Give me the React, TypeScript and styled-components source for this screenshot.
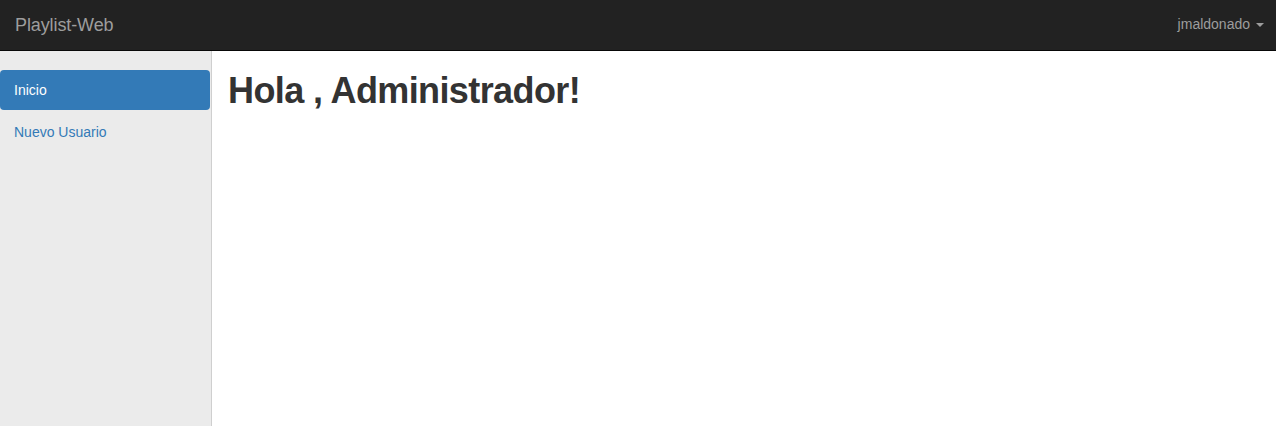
import React from "react";
import styled, { createGlobalStyle } from "styled-components";

const Global = createGlobalStyle`
  html, body {
    margin: 0;
    padding: 0;
    height: 100%;
  }
  body {
    font-family: "Liberation Sans", Arial, Helvetica, sans-serif;
    font-size: 14px;
    line-height: 1.42857;
    color: #333333;
    background: #ffffff;
  }
  #root {
    height: 100%;
  }
`;

const Styles = {
  Page: styled.div`
    display: flex;
    flex-direction: column;
    height: 100vh;
  `,

  Navbar: styled.nav`
    box-sizing: border-box;
    height: 51px;
    flex-shrink: 0;
    display: flex;
    align-items: center;
    justify-content: space-between;
    padding: 0 15px;
    background-color: #222222;
    border-bottom: 1px solid #080808;
  `,

  Brand: styled.a`
    font-size: 18px;
    line-height: 20px;
    color: #9d9d9d;
    text-decoration: none;
    margin-top: -1px;
    letter-spacing: -0.1px;
  `,

  UserMenu: styled.a`
    display: flex;
    align-items: center;
    gap: 6px;
    font-size: 14px;
    color: #9d9d9d;
    text-decoration: none;
    margin-right: -3px;
    margin-top: -1px;
  `,

  Caret: styled.span`
    width: 0;
    height: 0;
    border-top: 4px solid #9d9d9d;
    border-left: 4px solid transparent;
    border-right: 4px solid transparent;
    margin-top: 1px;
  `,

  Body: styled.div`
    flex: 1;
    display: flex;
  `,

  Sidebar: styled.aside`
    box-sizing: border-box;
    width: 212px;
    flex-shrink: 0;
    padding: 19px 1px 0 0;
    background-color: #ebebeb;
    border-right: 1px solid #cfcfcf;
  `,

  NavItem: styled.a<{ active?: boolean }>`
    display: block;
    padding: 10px 14px;
    line-height: 20px;
    font-size: 14px;
    border-radius: 4px;
    text-decoration: none;
    margin-bottom: 2px;
    color: ${(p) => (p.active ? "#ffffff" : "#337ab7")};
    background-color: ${(p) => (p.active ? "#337ab7" : "transparent")};
  `,

  Main: styled.main`
    flex: 1;
    padding: 0 16px;
  `,

  Title: styled.h1`
    margin: 20px 0 10px;
    font-size: 36px;
    font-weight: 700;
    letter-spacing: -0.6px;
    line-height: 1.1;
    color: #333333;
  `,
};

export default function App() {
  return (
    <Styles.Page>
      <Global />
      <Styles.Navbar>
        <Styles.Brand href="#">Playlist-Web</Styles.Brand>
        <Styles.UserMenu href="#">
          jmaldonado
          <Styles.Caret />
        </Styles.UserMenu>
      </Styles.Navbar>
      <Styles.Body>
        <Styles.Sidebar>
          <Styles.NavItem href="#" active>
            Inicio
          </Styles.NavItem>
          <Styles.NavItem href="#">Nuevo Usuario</Styles.NavItem>
        </Styles.Sidebar>
        <Styles.Main>
          <Styles.Title>Hola , Administrador!</Styles.Title>
        </Styles.Main>
      </Styles.Body>
    </Styles.Page>
  );
}
